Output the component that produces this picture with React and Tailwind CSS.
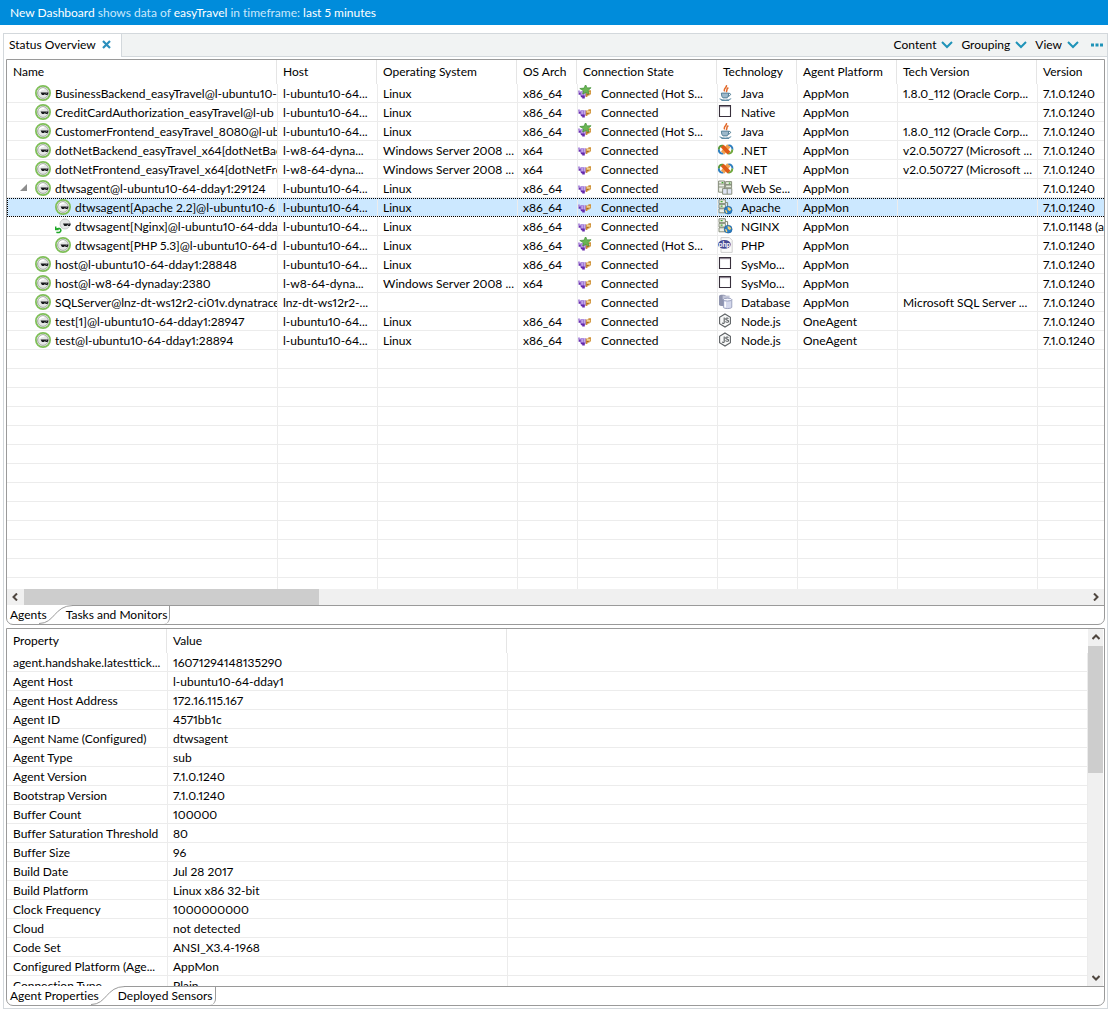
import { useState } from "react";
import clsx from "clsx";

const columns = [
  { label: "Name", width: 271 },
  { label: "Host", width: 100 },
  { label: "Operating System", width: 140 },
  { label: "OS Arch", width: 60 },
  { label: "Connection State", width: 140 },
  { label: "Technology", width: 80 },
  { label: "Agent Platform", width: 100 },
  { label: "Tech Version", width: 140 },
  { label: "Version", width: 140 },
];

const WIN = "Windows Server 2008 ...";
const UBUNTU = "l-ubuntu10-64...";
const ORACLE = "1.8.0_112 (Oracle Corp...";
const DOTNET = "v2.0.50727 (Microsoft ...";

const agents = [
  { name: "BusinessBackend_easyTravel@l-ubuntu10-", host: UBUNTU, os: "Linux", arch: "x86_64", hot: true, icon: "java", tech: "Java", platform: "AppMon", techVersion: ORACLE, version: "7.1.0.1240" },
  { name: "CreditCardAuthorization_easyTravel@l-ub", host: UBUNTU, os: "Linux", arch: "x86_64", icon: "native", tech: "Native", platform: "AppMon", version: "7.1.0.1240" },
  { name: "CustomerFrontend_easyTravel_8080@l-ub", host: UBUNTU, os: "Linux", arch: "x86_64", hot: true, icon: "java", tech: "Java", platform: "AppMon", techVersion: ORACLE, version: "7.1.0.1240" },
  { name: "dotNetBackend_easyTravel_x64[dotNetBac", host: "l-w8-64-dyna...", os: WIN, arch: "x64", icon: "net", tech: ".NET", platform: "AppMon", techVersion: DOTNET, version: "7.1.0.1240" },
  { name: "dotNetFrontend_easyTravel_x64[dotNetFro", host: "l-w8-64-dyna...", os: WIN, arch: "x64", icon: "net", tech: ".NET", platform: "AppMon", techVersion: DOTNET, version: "7.1.0.1240" },
  { name: "dtwsagent@l-ubuntu10-64-dday1:29124", host: UBUNTU, os: "Linux", arch: "x86_64", icon: "servers", tech: "Web Se...", platform: "AppMon", version: "7.1.0.1240", open: true },
  { name: "dtwsagent[Apache 2.2]@l-ubuntu10-6", host: UBUNTU, os: "Linux", arch: "x86_64", icon: "web", tech: "Apache", platform: "AppMon", version: "7.1.0.1240", child: true },
  { name: "dtwsagent[Nginx]@l-ubuntu10-64-dda", host: UBUNTU, os: "Linux", arch: "x86_64", icon: "web", tech: "NGINX", platform: "AppMon", version: "7.1.0.1148 (a", child: true, restart: true },
  { name: "dtwsagent[PHP 5.3]@l-ubuntu10-64-d", host: UBUNTU, os: "Linux", arch: "x86_64", hot: true, icon: "php", tech: "PHP", platform: "AppMon", version: "7.1.0.1240", child: true },
  { name: "host@l-ubuntu10-64-dday1:28848", host: UBUNTU, os: "Linux", arch: "x86_64", icon: "native", tech: "SysMo...", platform: "AppMon", version: "7.1.0.1240" },
  { name: "host@l-w8-64-dynaday:2380", host: "l-w8-64-dyna...", os: WIN, arch: "x64", icon: "native", tech: "SysMo...", platform: "AppMon", version: "7.1.0.1240" },
  { name: "SQLServer@lnz-dt-ws12r2-ci01v.dynatrace", host: "lnz-dt-ws12r2-...", os: "", arch: "", icon: "database", tech: "Database", platform: "AppMon", techVersion: "Microsoft SQL Server ...", version: "7.1.0.1240" },
  { name: "test[1]@l-ubuntu10-64-dday1:28947", host: UBUNTU, os: "Linux", arch: "x86_64", icon: "node", tech: "Node.js", platform: "OneAgent", version: "7.1.0.1240" },
  { name: "test@l-ubuntu10-64-dday1:28894", host: UBUNTU, os: "Linux", arch: "x86_64", icon: "node", tech: "Node.js", platform: "OneAgent", version: "7.1.0.1240" },
];

const properties = [
  ["agent.handshake.latesttick...", "16071294148135290"],
  ["Agent Host", "l-ubuntu10-64-dday1"],
  ["Agent Host Address", "172.16.115.167"],
  ["Agent ID", "4571bb1c"],
  ["Agent Name (Configured)", "dtwsagent"],
  ["Agent Type", "sub"],
  ["Agent Version", "7.1.0.1240"],
  ["Bootstrap Version", "7.1.0.1240"],
  ["Buffer Count", "100000"],
  ["Buffer Saturation Threshold", "80"],
  ["Buffer Size", "96"],
  ["Build Date", "Jul 28 2017"],
  ["Build Platform", "Linux x86 32-bit"],
  ["Clock Frequency", "1000000000"],
  ["Cloud", "not detected"],
  ["Code Set", "ANSI_X3.4-1968"],
  ["Configured Platform (Age...", "AppMon"],
  ["Connection Type", "Plain"],
];

const emptyRows = Array.from({ length: 13 });

function AgentIcon({ restart }) {
  return (
    <svg viewBox="0 0 16 16" className="size-4 shrink-0" aria-hidden="true">
      {restart ? (
        <circle cx="10" cy="6" r="5" fill="#e4e6e6" stroke="#b9bdbd" strokeWidth="0.8" />
      ) : (
        <>
          <circle cx="8" cy="8" r="7.1" fill="#fff" stroke="#7fbf58" strokeWidth="1.8" />
          <circle cx="8" cy="8" r="5.4" fill="#e4e6e5" stroke="#8b9489" strokeWidth="0.8" />
          <path d="M4.4 6.4a4.4 4.4 0 0 1 5-2" stroke="#fff" strokeWidth="1.6" fill="none" />
        </>
      )}
      <g transform={restart ? "translate(2.4 -2)" : undefined}>
        <path d="M5.6 7.6h7.6v1l-.6 1.4h-2l-.7-1.2-.7 1.2H7l-.8-1.2z" fill="#17191b" />
        <path d="M10.8 8.2h1" stroke="#b8a8c4" strokeWidth="0.8" />
      </g>
      {restart && (
        <path d="M.7 8.6v3h3M1.4 11.2c2-1.5 4.8-.7 4.4 1.6-.3 1.6-2.4 2.2-4.4 1.5" fill="none" stroke="#1fa828" strokeWidth="1.5" />
      )}
    </svg>
  );
}

function ConnectionIcon({ hot }) {
  return (
    <svg viewBox="0 0 16 16" className="size-4 shrink-0" aria-hidden="true">
      <path d="M0 5.4h2v2.2H0z" fill="#b394de" />
      <path d="M.6 7.4h3.2v2.4H.6z" fill="#6a2fb2" />
      <path d="M2.4 6.2h5.4v5.4H2.4z" fill="#9266d2" />
      <path d="M3.6 6.8h1v4h-1zM5.8 6h.9v5h-.9z" fill="#ddcdf3" />
      <path d="M3 10.6h3.8v2.8H4.2v-1.2H3z" fill="#6429ac" />
      <path d="M7.8 6.4h2.6V5.2H13v4.4h-1.4v1H9.4V12H7.8z" fill="#cf923a" />
      <path d="M8.8 7.2h3.4v1.4H8.8z" fill="#fbe6ac" />
      <path d="M8.6 9.2h1.8v1H8.6z" fill="#9d5b14" />
      {hot && (
        <path d="M7.6-.5l1.4 3.4 4.1-.2-3 2.9 1 3.4-3.3-1.4L4.7 9l.7-3.2-3.6-2.3 4.3-.4z" fill="#6ab553" stroke="#3f8f35" strokeWidth="0.7" />
      )}
    </svg>
  );
}

function TechIcon({ name }) {
  return (
    <svg viewBox="0 0 16 16" className="size-4 shrink-0" aria-hidden="true">
      {name === "java" && (
        <g fill="none">
          <path d="M8.3.2c1.3 2-3.6 3.4-1.6 6.2M10.4 2.8C7.6 4 9.9 5 8.2 7" stroke="#e2692a" strokeWidth="1.5" />
          <path d="M3.4 8.1h7.2c0 3-.6 4.4-1.4 4.8H5c-1-.6-1.5-2-1.6-4.8z" fill="#9db9cb" stroke="#4b7890" strokeWidth="0.9" />
          <path d="M10.6 8.4c3-.6 2.6 2.6-.8 2.8" stroke="#4b7890" />
          <path d="M1.6 13.8c2.6 1.8 8.4 1.8 11.6-.1M3.4 15.5h7.8" stroke="#5d8aa3" />
        </g>
      )}
      {name === "native" && (
        <>
          <path d="M1.5 1.5h11v11h-11z" fill="#fff" stroke="#38303c" strokeWidth="1.1" />
          <path d="M2 2.5h10" stroke="#8d8590" />
          <path d="M2 3.4h10" stroke="#d7d3da" strokeWidth="0.6" />
        </>
      )}
      {name === "net" && (
        <g fill="none">
          <path d="M5 3.8C2 3.2.8 5.4.8 7.8" stroke="#5b9a3c" strokeWidth="2" />
          <path d="M.8 7.6c0 2.6 1.8 4.6 4.6 3.8" stroke="#2d7fc0" strokeWidth="2" />
          <path d="M10 3.6c3-.8 4.6 1.4 4.4 4" stroke="#2d7fc0" strokeWidth="2" />
          <path d="M14.3 7.6c0 2.4-1.5 4.4-4.2 3.7" stroke="#6fa93e" strokeWidth="2" />
          <path d="M10.8 3.8L4.6 11" stroke="#f0a052" strokeWidth="4.4" />
          <path d="M4.2 4l6.8 7.2" stroke="#de5a17" strokeWidth="4" />
        </g>
      )}
      {name === "servers" && (
        <g stroke="#7d8471" strokeWidth="0.9">
          <path d="M.6 1h6v11.2h-6z" fill="#eef2ea" />
          <path d="M.6 4h6M.6 7h6" />
          <path d="M7.6 1.6h6v3.2h-6zM7.6 4.8h6v3h-6z" fill="#e6ecdf" />
          <path d="M4.6 8.6h9.2v5.6H4.6z" fill="#dfe5f5" />
          <path d="M9.2 8.6v5.6" />
          <path d="M3.6 2.6h1.8M10.8 3.2h1.6" stroke="#3fa32c" strokeWidth="1.2" />
        </g>
      )}
      {name === "web" && (
        <>
          <path d="M1 .8h6.4v3.8H1zM1 5.4h6.4v3.6H1zM1 9.8h6v4H1z" fill="#edf0e8" stroke="#7d8471" strokeWidth="0.9" />
          <path d="M2.6 2.6h2M2.6 7.2h2" stroke="#46a52f" strokeWidth="1.3" />
          <path d="M7.4 3.6h2.2v4" fill="none" stroke="#7d8471" />
          <circle cx="10.2" cy="11.2" r="3.9" fill="#2a7fc6" stroke="#1f5f98" strokeWidth="0.6" />
          <path d="M9.6 7.9c2.6.2 3.6 1.8 3.6 3l-1.8 1-1.6-1.2zM6.8 11l2 .6.6 2.2-1 .6z" fill="#f1cd74" />
        </>
      )}
      {name === "php" && (
        <>
          <path d="M3 .6h8.4l2.8 2.8v12H3z" fill="#fafafa" stroke="#cfcfcf" />
          <ellipse cx="6.4" cy="7.4" rx="6.4" ry="4.3" fill="#454a94" />
          <text x="6.4" y="9.5" textAnchor="middle" className="fill-white text-[7px] font-bold">php</text>
        </>
      )}
      {name === "database" && (
        <>
          <path d="M1 2.2C1 .4 8 .4 8 2.2v8.6c0 1.6-7 1.6-7 0z" fill="#8f94ae" />
          <path d="M4.6 1.6h7v4h-7z" fill="#c3c6d8" />
          <path d="M5.4 5.6h8.4v7.6c0 1.8-8.4 1.8-8.4 0z" fill="#d4d8ec" stroke="#7f86ab" strokeWidth="0.7" />
          <ellipse cx="9.6" cy="5.6" rx="4.2" ry="1.4" fill="#f5f6fc" stroke="#7f86ab" strokeWidth="0.7" />
          <path d="M7.2 7.8v5.6" stroke="#fff" strokeWidth="1.4" />
        </>
      )}
      {name === "node" && (
        <g fill="none" stroke="#5c6063">
          <path d="M7 1l5.4 3.2v6.6L7 14l-5.4-3.2V4.2z" strokeWidth="1.1" fill="#f7f8f8" />
          <path d="M6.2 4.6v5.2c0 .9-1.6 1-2 0M10.4 5.6c-.6-.9-2.7-.8-2.7.4 0 1.5 2.9.7 2.9 2.2 0 1.4-2.6 1.4-3.1.2" strokeWidth="1.1" />
        </g>
      )}
    </svg>
  );
}

function HeaderCell({ children }) {
  return (
    <th scope="col" className="h-6 p-0 pr-px text-left font-normal first:pl-px">
      <div className="h-6 truncate border-r border-[#e5e5e5] pl-[5px] leading-6">{children}</div>
    </th>
  );
}

function Cell({ children, className }) {
  return (
    <td className={clsx("h-[19px] overflow-hidden whitespace-nowrap border-r border-b border-[#ececec] p-0 pt-px leading-[17px]", className)}>
      {children}
    </td>
  );
}

function Chevron({ className }) {
  return (
    <svg viewBox="0 0 12 8" className={className} fill="none" stroke="currentColor" strokeWidth="2" aria-hidden="true">
      <path d="M1 1l5 5 5-5" />
    </svg>
  );
}

function ScrollButton({ label, path }) {
  return (
    <button type="button" aria-label={label} className="flex size-4 shrink-0 items-center justify-center text-[#4f463f]">
      <svg viewBox="0 0 8 8" className="size-2" fill="none" stroke="currentColor" strokeWidth="2">
        <path d={path} />
      </svg>
    </button>
  );
}

function BottomTabs({ tabs }) {
  const [first, second] = tabs;
  return (
    <div role="tablist" className="flex h-[19px] shrink-0 leading-[18px]">
      <button type="button" role="tab" aria-selected="true" className="whitespace-nowrap pl-[3px]">
        {first}
      </button>
      <svg viewBox="0 0 34 19" className="-ml-2 h-[19px] w-[34px] shrink-0" fill="none" stroke="#9a9a9a" aria-hidden="true">
        <path d="M0 18.5C16 18.5 15 .5 34 .5" />
      </svg>
      <button type="button" role="tab" aria-selected="false" className="relative -ml-[7px] whitespace-nowrap pr-[3px]">
        {second}
        <span className="absolute top-0 right-0 left-1.5 border-t border-[#9a9a9a]" />
      </button>
      <div className="-ml-1.5 w-1.5 rounded-br-[6px] border-r border-[#9a9a9a]" />
      <div className="flex-1 border-t border-[#9a9a9a]" />
    </div>
  );
}

function AgentTable() {
  const [selected, setSelected] = useState(6);

  return (
    <div className="min-h-0 flex-1 overflow-hidden">
      <table className="w-[1171px] table-fixed border-separate border-spacing-0">
        <colgroup>
          {columns.map((c) => (
            <col key={c.label} style={{ width: c.width }} />
          ))}
        </colgroup>
        <thead>
          <tr>
            {columns.map((c) => (
              <HeaderCell key={c.label}>{c.label}</HeaderCell>
            ))}
          </tr>
        </thead>
        <tbody>
          {agents.map((a, i) => (
            <tr
              key={a.name}
              onClick={() => setSelected(i)}
              className={clsx(i === selected && "bg-[#cce8ff] outline-1 -outline-offset-1 outline-dotted outline-black")}
            >
              <Cell>
                <div className={clsx("relative flex h-[17px] items-start gap-1", a.child ? "pl-12" : "pl-7")}>
                  {a.open && (
                    <svg viewBox="0 0 7 7" className="absolute top-1 left-[13px] size-[7px]" aria-hidden="true">
                      <path d="M7 0v7H0z" fill="#8d8d8d" />
                    </svg>
                  )}
                  <AgentIcon restart={a.restart} />
                  {a.name}
                </div>
              </Cell>
              <Cell className="pl-[5px]">{a.host}</Cell>
              <Cell className="pl-[5px]">{a.os}</Cell>
              <Cell className="pl-[5px]">{a.arch}</Cell>
              <Cell>
                <div className="flex h-[17px] items-start gap-[7px]">
                  <ConnectionIcon hot={a.hot} />
                  {a.hot ? "Connected (Hot S..." : "Connected"}
                </div>
              </Cell>
              <Cell>
                <div className="flex h-[17px] items-start gap-[7px]">
                  <TechIcon name={a.icon} />
                  {a.tech}
                </div>
              </Cell>
              <Cell className="pl-[5px]">{a.platform}</Cell>
              <Cell className="pl-[5px]">{a.techVersion}</Cell>
              <Cell className="pl-[5px]">{a.version}</Cell>
            </tr>
          ))}
          {emptyRows.map((_, i) => (
            <tr key={i}>
              {columns.map((c) => (
                <Cell key={c.label} />
              ))}
            </tr>
          ))}
        </tbody>
      </table>
    </div>
  );
}

function PropertyTable() {
  return (
    <div className="min-w-0 flex-1 overflow-hidden">
      <table className="w-full table-fixed border-separate border-spacing-0">
        <colgroup>
          <col className="w-[161px]" />
          <col className="w-[340px]" />
          <col />
        </colgroup>
        <thead>
          <tr>
            <HeaderCell>Property</HeaderCell>
            <HeaderCell>Value</HeaderCell>
            <td />
          </tr>
        </thead>
        <tbody>
          {properties.map(([name, value]) => (
            <tr key={name}>
              <Cell className="pl-1.5">{name}</Cell>
              <Cell className="pl-[5px]">{value}</Cell>
              <Cell />
            </tr>
          ))}
        </tbody>
      </table>
    </div>
  );
}

export default function App() {
  return (
    <div className="flex h-screen flex-col bg-white font-[Lato,sans-serif] text-[12px] text-black proportional-nums [font-variant-ligatures:none]">
      <header className="mb-2 h-[25px] shrink-0 bg-[#008cdb] pl-2.5 leading-[25px] text-[#c9e8fb]">
        <span className="text-white">New Dashboard</span> shows data of <span className="text-white">easyTravel</span> in timeframe:{" "}
        <span className="text-white">last 5 minutes</span>
      </header>

      <main className="ml-[3px] flex min-h-0 flex-1 flex-col border border-[#d3d8dc]">
        {/* view tab and toolbar */}
        <div className="flex h-[23px] shrink-0 items-stretch bg-[#f1f3f3]">
          <div className="flex items-center gap-1.5 border-r border-[#d3d8dc] bg-white pr-2.5 pb-0.5 pl-[5px]">
            <span>Status Overview</span>
            <button type="button" aria-label="Close" className="text-[#2a8fbd]">
              <svg viewBox="0 0 9 9" className="size-[9px]" fill="none" stroke="currentColor" strokeWidth="2.2">
                <path d="M1 1l7 7M8 1L1 8" />
              </svg>
            </button>
          </div>
          <div className="flex flex-1 items-center justify-end gap-2 border-b border-[#d3d8dc] pr-1">
            {["Content", "Grouping", "View"].map((label) => (
              <button key={label} type="button" className="flex items-center gap-[5px]">
                {label}
                <Chevron className="h-2 w-3 text-[#1f93b8]" />
              </button>
            ))}
            <button type="button" aria-label="More" className="ml-1 text-[#1f93b8]">
              <svg viewBox="0 0 12 4" className="h-1 w-3" fill="currentColor">
                <path d="M0 .5h3v3H0zM4.5.5h3v3h-3zM9 .5h3v3H9z" />
              </svg>
            </button>
          </div>
        </div>

        <div className="grid min-h-0 flex-1 grid-rows-[3fr_2fr] gap-[3px] p-0.5">
          <section aria-label="Agents" className="flex min-h-0 min-w-0 flex-col overflow-hidden rounded-b-[7px] border border-[#9a9a9a]">
            <AgentTable />
            <div className="flex h-4 shrink-0 bg-[#f0f0f0]">
              <ScrollButton label="Scroll left" path="M6 0.5L2.5 4L6 7.5" />
              <div className="flex-1 pl-px">
                <div className="h-4 w-[27.7%] bg-[#cdcdcd]" />
              </div>
              <ScrollButton label="Scroll right" path="M2 0.5L5.5 4L2 7.5" />
            </div>
            <BottomTabs tabs={["Agents", "Tasks and Monitors"]} />
          </section>

          <section aria-label="Agent properties" className="flex min-h-0 min-w-0 flex-col overflow-hidden rounded-b-[7px] border border-[#9a9a9a]">
            <div className="flex min-h-0 flex-1 pr-px">
              <PropertyTable />
              <div className="flex w-[15px] shrink-0 flex-col bg-[#f0f0f0]">
                <ScrollButton label="Scroll up" path="M0.5 6L4 2.5L7.5 6" />
                <div className="flex-1 pt-px">
                  <div className="h-[39%] bg-[#cdcdcd]" />
                </div>
                <ScrollButton label="Scroll down" path="M0.5 2L4 5.5L7.5 2" />
              </div>
            </div>
            <BottomTabs tabs={["Agent Properties", "Deployed Sensors"]} />
          </section>
        </div>
      </main>
    </div>
  );
}
